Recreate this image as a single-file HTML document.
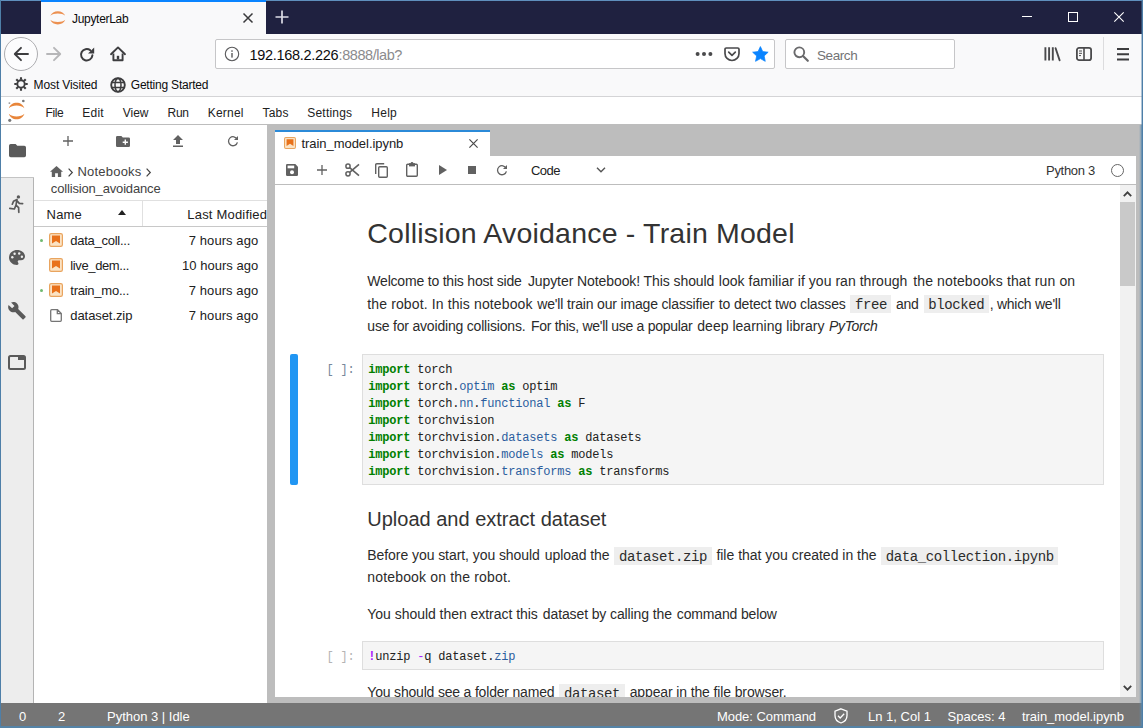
<!DOCTYPE html>
<html>
<head>
<meta charset="utf-8">
<title>JupyterLab</title>
<style>
*{box-sizing:border-box;margin:0;padding:0}
html,body{width:1143px;height:728px;overflow:hidden;background:#fff;font-family:"Liberation Sans",sans-serif;color:#222}
.abs{position:absolute}
#win{position:absolute;left:0;top:0;width:1143px;height:728px;overflow:hidden;background:#f9f9fa}
.t{position:absolute;white-space:nowrap;line-height:1}
.m{font-family:"Liberation Mono",monospace}
svg{position:absolute;overflow:visible}
/* ---------- browser chrome ---------- */
#titlebar{left:0;top:0;width:1143px;height:34px;background:#1f2140}
#tab{left:41px;top:0;width:225px;height:34px;background:#f9f9fa;border-top:2px solid #0a84ff}
#navbar{left:0;top:34px;width:1143px;height:63px;background:#f9f9fa;border-bottom:1px solid #d4d4d6}
#urlbar{left:215px;top:39px;width:560px;height:30px;background:#fff;border:1px solid #c6c6c8;border-radius:2px}
#searchbar{left:785px;top:39px;width:170px;height:30px;background:#fff;border:1px solid #c6c6c8;border-radius:2px}
/* ---------- jupyterlab ---------- */
#menubar{left:0;top:97px;width:1143px;height:28px;background:#fff;border-bottom:1px solid #bdbdbd}
#lab{left:0;top:125px;width:1143px;height:578px;background:#bdbdbd}
#sidebar{left:0;top:125px;width:34px;height:578px;background:#ededed;border-right:1px solid #b4b4b4}
#sidetab{left:0;top:125px;width:35px;height:52px;background:#fff}
#sidetop{left:0;top:177px;width:34px;height:1px;background:#c4c4c4}
#fb{left:34px;top:125px;width:233px;height:578px;background:#fff}
#nbtab{left:275px;top:130px;width:215px;height:26px;background:#fff;border-top:2px solid #2b8ad8}
#nbtool{left:275px;top:156px;width:861px;height:29px;background:#fff;border-bottom:1px solid #bdbdbd}
#nb{left:275px;top:185px;width:861px;height:512px;background:#fff;overflow:hidden}
#nbclip{left:275px;top:185px;width:861px;height:512px;overflow:hidden}
#nbin{left:-275px;top:-185px;width:1143px;height:728px}
#status{left:0;top:703px;width:1143px;height:25px;background:#757575}
#bl{left:0;top:0;width:1px;height:728px;background:#4e7fa8}
#br{left:1142px;top:0;width:1px;height:728px;background:#4e7fa8}
#br3{left:1141px;top:0;width:1px;height:728px;background:rgba(78,127,168,.45)}
#bb{left:0;top:726px;width:1143px;height:2px;background:#5583a6}
#bt{left:0;top:0;width:1143px;height:1px;background:#5f8fbd}
#br2{left:1139px;top:125px;width:3px;height:601px;background:linear-gradient(to right,rgba(91,139,176,0),rgba(91,139,176,.75))}
</style>
</head>
<body>
<div id="win">
<div class="abs" id="titlebar"></div><div class="abs" id="bt"></div>
<div class="abs" id="tab"></div>
<div class="abs" id="navbar"></div>
<div class="abs" id="urlbar"></div>
<div class="abs" id="searchbar"></div>
<div class="abs" id="menubar"></div>
<div class="abs" id="lab"></div>
<div class="abs" id="sidebar"></div>
<div class="abs" id="sidetab"></div><div class="abs" id="sidetop"></div>
<div class="abs" id="fb"></div>
<div class="abs" id="nbtab"></div>
<div class="abs" id="nbtool"></div>
<div class="abs" id="nb"></div>
<div class="abs" id="status"></div>
<svg style="left:49.200px;top:8.600px" width="17.600" height="17.600" viewBox="0 0 16 16"><path d="M1.2 6.2C2.2 3.6 4.9 2 8 2s5.8 1.6 6.8 4.2C13.3 4.9 10.8 4.2 8 4.2S2.700 4.900 1.200 6.200z" fill="#ec9050"/><path d="M1.2 9.800C2.2 12.400 4.900 14 8 14s5.800-1.600 6.800-4.200C13.300 11.100 10.800 11.800 8 11.800S2.700 11.100 1.200 9.800z" fill="#ec9050"/></svg>
<div class="t" style="left:72.0px;top:12.5px;font-size:12px;color:#0c0c0d;letter-spacing:-0.307px;">JupyterLab</div>
<svg style="left:243px;top:13px" width="10" height="10" viewBox="0 0 10 10"><path d="M0.500 0.500L9.500 9.500M9.500 0.500L0.500 9.500" stroke="#3a3a3c" stroke-width="1.500" fill="none"/></svg>
<svg style="left:275px;top:10px" width="14" height="14" viewBox="0 0 14 14"><path d="M7 0.500V13.500M0.500 7H13.500" stroke="#dcdce6" stroke-width="1.700" fill="none"/></svg>
<svg style="left:1022px;top:12px" width="104" height="11" viewBox="0 0 104 11"><path d="M0 4.500H10" stroke="#fff" stroke-width="1"/><rect x="46.500" y="0.500" width="9" height="9" fill="none" stroke="#fff" stroke-width="1"/><path d="M92.300 0.300L101.700 9.700M101.700 0.300L92.300 9.700" stroke="#fff" stroke-width="1.100"/></svg>
<div class="abs" style="left:4px;top:37px;width:34px;height:34px;border-radius:50%;border:1px solid #adadb0;background:#fcfcfd"></div>
<svg style="left:13px;top:46px" width="16" height="16" viewBox="0 0 16 16"><path d="M15 8H2M8 1.800L1.800 8L8 14.200" stroke="#3d3d3f" stroke-width="1.900" fill="none" stroke-linecap="round" stroke-linejoin="round"/></svg>
<svg style="left:46px;top:46px" width="16" height="16" viewBox="0 0 16 16"><path d="M1 8H14M8 1.800L14.200 8L8 14.200" stroke="#b6b6b8" stroke-width="1.900" fill="none" stroke-linecap="round" stroke-linejoin="round"/></svg>
<svg style="left:78.500px;top:46.500px" width="16" height="15" viewBox="0 0 16 15"><path d="M13.400 8.300A5.700 5.700 0 1 1 11.300 3.300" stroke="#3d3d3f" stroke-width="2" fill="none" stroke-linecap="round"/><path d="M15.200 0.400V6.600H9z" fill="#3d3d3f"/></svg>
<svg style="left:110px;top:46px" width="16" height="16" viewBox="0 0 16 16"><path d="M1 8.200L8 1.400L15 8.200" stroke="#3d3d3f" stroke-width="1.900" fill="none" stroke-linecap="round" stroke-linejoin="round"/><path d="M3.400 7.600V14.200H12.600V7.600" stroke="#3d3d3f" stroke-width="1.900" fill="none" stroke-linejoin="round"/><rect x="6.800" y="9.800" width="2.400" height="3.600" fill="#3d3d3f"/></svg>
<svg style="left:224px;top:46px" width="16" height="16" viewBox="0 0 16 16"><circle cx="8" cy="8" r="6.700" fill="none" stroke="#5a5a5c" stroke-width="1.100"/><rect x="7.300" y="7" width="1.400" height="4.600" fill="#5a5a5c"/><rect x="7.300" y="4.300" width="1.400" height="1.500" fill="#5a5a5c"/></svg>
<div class="t" style="left:249.6px;top:47.6px;font-size:14.5px;color:#0c0c0d;letter-spacing:-0.318px;">192.168.2.226</div>
<div class="t" style="left:338.6px;top:47.6px;font-size:14.5px;color:#8b8b8d;letter-spacing:-0.433px;">:8888/lab?</div>
<svg style="left:695px;top:52px" width="18" height="4" viewBox="0 0 18 4"><circle cx="2.600" cy="2" r="2" fill="#4a4a4c"/><circle cx="9" cy="2" r="2" fill="#4a4a4c"/><circle cx="15.400" cy="2" r="2" fill="#4a4a4c"/></svg>
<svg style="left:724px;top:47px" width="16" height="15" viewBox="0 0 16 15"><path d="M2.300 1H13.700Q15 1 15 2.300V6.500A7 7 0 0 1 1 6.500V2.300Q1 1 2.300 1z" stroke="#4a4a4c" stroke-width="1.700" fill="none"/><path d="M4.700 5.200L8 8.400L11.300 5.200" stroke="#4a4a4c" stroke-width="1.700" fill="none" stroke-linecap="round" stroke-linejoin="round"/></svg>
<svg style="left:751.800px;top:46px" width="16.800" height="15.900" viewBox="0 0 18 17"><path d="M9 0.600L11.500 6L17.300 6.600L13 10.600L14.200 16.400L9 13.500L3.800 16.400L5 10.600L0.700 6.600L6.500 6z" fill="#0a84ff" stroke="#0a84ff" stroke-width="0.800" stroke-linejoin="round"/></svg>
<svg style="left:793px;top:46px" width="16" height="16" viewBox="0 0 16 16"><circle cx="6.300" cy="6.300" r="4.900" fill="none" stroke="#6a6a6c" stroke-width="1.900"/><path d="M10 10L14.800 14.800" stroke="#6a6a6c" stroke-width="2.200" stroke-linecap="round"/></svg>
<div class="t" style="left:817.0px;top:48.5px;font-size:13.5px;color:#737375;letter-spacing:-0.414px;">Search</div>
<svg style="left:1044px;top:47px" width="17" height="14" viewBox="0 0 17 14"><path d="M1.400 0.300V13.500M5.100 0.300V13.500M8.800 0.300V13.500" stroke="#4a4a4c" stroke-width="1.900"/><path d="M11.600 1.200L15.600 13.300" stroke="#4a4a4c" stroke-width="1.900" stroke-linecap="round"/></svg>
<svg style="left:1076px;top:47px" width="16" height="14" viewBox="0 0 16 14"><rect x="0.900" y="0.900" width="14.200" height="12.200" rx="2.200" fill="none" stroke="#4a4a4c" stroke-width="1.800"/><path d="M8 1V13" stroke="#4a4a4c" stroke-width="1.600"/><path d="M3 4H6M3 6.300H6M3 8.600H5" stroke="#4a4a4c" stroke-width="1"/></svg>
<div class="abs" style="left:1103px;top:37px;width:1px;height:33px;background:#dcdcde"></div>
<svg style="left:1117px;top:48px" width="12" height="13" viewBox="0 0 12 13"><path d="M0 1H12M0 6.200H12M0 11.400H12" stroke="#3d3d3f" stroke-width="2"/></svg>
<svg style="left:14px;top:77px" width="14" height="14" viewBox="0 0 14 14"><circle cx="7" cy="7" r="3.700" fill="none" stroke="#3d3d3f" stroke-width="1.900"/><path d="M7 0.300V2.800M7 11.200V13.700M0.300 7H2.800M11.200 7H13.700M2.260 2.260L4.030 4.030M9.970 9.970L11.740 11.740M2.260 11.740L4.030 9.970M9.970 4.030L11.740 2.260" stroke="#3d3d3f" stroke-width="2.100"/></svg>
<div class="t" style="left:33.6px;top:78.8px;font-size:12px;color:#0c0c0d;letter-spacing:-0.120px;">Most Visited</div>
<svg style="left:110px;top:77px" width="16" height="16" viewBox="0 0 16 16"><circle cx="8" cy="8" r="6.800" fill="none" stroke="#3d3d3f" stroke-width="1.900"/><ellipse cx="8" cy="8" rx="3" ry="6.800" fill="none" stroke="#3d3d3f" stroke-width="1.500"/><path d="M1.300 5.600H14.700M1.300 10.400H14.700" stroke="#3d3d3f" stroke-width="1.500"/></svg>
<div class="t" style="left:130.8px;top:78.8px;font-size:12px;color:#0c0c0d;letter-spacing:-0.215px;">Getting Started</div>
<svg style="left:7.400px;top:99px" width="19.200" height="24" viewBox="0 0 16 20"><path d="M1.500 7.800C2.400 4.900 5 3.200 8 3.200s5.600 1.700 6.500 4.600C13 6.300 10.700 5.500 8 5.500S3 6.300 1.500 7.800z" fill="#e8853a"/><path d="M1.500 12.200C2.400 15.100 5 16.800 8 16.800s5.600-1.700 6.500-4.600C13 13.700 10.700 14.500 8 14.500S3 13.700 1.500 12.200z" fill="#e8853a"/><circle cx="13.600" cy="1.700" r="1.100" fill="#767677"/><circle cx="2.300" cy="17.800" r="1.300" fill="#767677"/><circle cx="2" cy="3.400" r="0.800" fill="#989798"/></svg>
<div class="t" style="left:45.4px;top:107.1px;font-size:12px;color:#212121;letter-spacing:-0.336px;">File</div>
<div class="t" style="left:82.3px;top:107.1px;font-size:12px;color:#212121;letter-spacing:0.203px;">Edit</div>
<div class="t" style="left:122.7px;top:107.1px;font-size:12px;color:#212121;">View</div>
<div class="t" style="left:167.6px;top:107.1px;font-size:12px;color:#212121;letter-spacing:-0.305px;">Run</div>
<div class="t" style="left:207.7px;top:107.1px;font-size:12px;color:#212121;letter-spacing:0.219px;">Kernel</div>
<div class="t" style="left:262.5px;top:107.1px;font-size:12px;color:#212121;letter-spacing:0.185px;">Tabs</div>
<div class="t" style="left:307.3px;top:107.1px;font-size:12px;color:#212121;letter-spacing:0.193px;">Settings</div>
<div class="t" style="left:371.3px;top:107.1px;font-size:12px;color:#212121;letter-spacing:0.253px;">Help</div>
<svg style="left:8.700px;top:144.300px" width="17" height="13.300" viewBox="0 0 18 14"><path d="M1.800 0H7L8.800 1.800H16.200Q18 1.800 18 3.600V12.200Q18 14 16.200 14H1.800Q0 14 0 12.200V1.800Q0 0 1.800 0z" fill="#5a5a5a"/></svg>
<svg style="left:9px;top:195px" width="15" height="18" viewBox="0 0 15 18"><circle cx="9.400" cy="1.900" r="1.700" fill="#5a5a5a"/><path d="M8 4.500L4.500 6.300L3.300 9.200M8 4.500L7 10.200L9.600 12.600L9.800 17.300M7 10.200L5.400 14L0.800 13.300M8.300 6.200L10.300 8.300L13.600 8.600" stroke="#5a5a5a" stroke-width="1.700" fill="none" stroke-linecap="round" stroke-linejoin="round"/></svg>
<svg style="left:9px;top:250px" width="16" height="15" viewBox="0 0 16 15"><path d="M8 0C3.600 0 0 3.300 0 7.500S3.600 15 8 15c.9 0 1.500-.6 1.500-1.400 0-.4-.2-.7-.4-1-.2-.3-.4-.6-.4-1 0-.8.700-1.400 1.500-1.400H12c2.200 0 4-1.700 4-3.800C16 2.800 12.400 0 8 0z" fill="#5a5a5a"/><circle cx="3.300" cy="7.300" r="1.200" fill="#eee"/><circle cx="5.600" cy="3.700" r="1.200" fill="#eee"/><circle cx="10.200" cy="3.500" r="1.200" fill="#eee"/><circle cx="12.900" cy="6.700" r="1.200" fill="#eee"/></svg>
<svg style="left:8px;top:301px" width="18" height="18" viewBox="0 0 18 18"><path d="M17.500 15.300L10.200 8C10.900 6.100 10.500 4 9 2.500 7.400 .9 5 .6 3.100 1.500L6.500 4.900 4.100 7.300.6 3.900C-.3 5.800.1 8.200 1.700 9.800c1.500 1.500 3.700 1.900 5.500 1.200l7.300 7.300c.3.300.8.300 1.100 0l1.800-1.800c.4-.4.400-.900.100-1.200z" fill="#5a5a5a"/></svg>
<svg style="left:8px;top:355px" width="18" height="15" viewBox="0 0 18 15"><rect x="1" y="1" width="16" height="13" rx="1.500" fill="none" stroke="#5a5a5a" stroke-width="2"/><rect x="10" y="1" width="7" height="4" fill="#5a5a5a"/></svg>
<svg style="left:63px;top:136px" width="10" height="10" viewBox="0 0 10 10"><path d="M5 0V10M0 5H10" stroke="#616161" stroke-width="1.300"/></svg>
<svg style="left:116px;top:136px" width="14" height="11" viewBox="0 0 14 11"><path d="M1.300 0H5.400L6.800 1.400H12.700Q14 1.400 14 2.700V9.700Q14 11 12.700 11H1.300Q0 11 0 9.700V1.300Q0 0 1.300 0z" fill="#616161"/><path d="M9.300 3.600V8.800M6.700 6.200H11.900" stroke="#fff" stroke-width="1.400"/></svg>
<svg style="left:173px;top:135px" width="10" height="12" viewBox="0 0 10 12"><path d="M5 0L10 5H7V9H3V5H0z" fill="#616161"/><rect x="0" y="10.500" width="10" height="1.500" fill="#616161"/></svg>
<svg style="left:227px;top:135px" width="12" height="12" viewBox="0 0 12 12"><path d="M10.100 4.300A4.500 4.500 0 1 0 10.400 7.300" stroke="#616161" stroke-width="1.300" fill="none"/><path d="M11 1V5H7z" fill="#616161"/></svg>
<svg style="left:50px;top:166px" width="13" height="11" viewBox="0 0 13 11"><path d="M6.500 0L13 5.800H11.200V11H7.900V7.200H5.100V11H1.800V5.800H0z" fill="#616161"/></svg>
<svg style="left:68.3px;top:167.5px" width="5" height="9" viewBox="0 0 5 9"><path d="M0.600 0.600L4.300 4.500L0.600 8.400" stroke="#424242" stroke-width="1.200" fill="none"/></svg>
<div class="t" style="left:77.5px;top:165.0px;font-size:13px;color:#424242;letter-spacing:0.205px;">Notebooks</div>
<svg style="left:146px;top:167.5px" width="5" height="9" viewBox="0 0 5 9"><path d="M0.600 0.600L4.300 4.500L0.600 8.400" stroke="#424242" stroke-width="1.200" fill="none"/></svg>
<div class="t" style="left:50.8px;top:181.6px;font-size:13px;color:#424242;letter-spacing:-0.161px;">collision_avoidance</div>
<div class="abs" style="left:34px;top:200px;width:233px;height:27px;border-top:1px solid #e0e0e0;border-bottom:1px solid #c8c8c8"></div>
<div class="abs" style="left:142px;top:201px;width:1px;height:25px;background:#e0e0e0"></div>
<div class="t" style="left:46.6px;top:207.5px;font-size:13px;color:#212121;letter-spacing:0.153px;">Name</div>
<svg style="left:118px;top:210px" width="8" height="5" viewBox="0 0 8 5"><path d="M4 0L8 5H0z" fill="#212121"/></svg>
<div class="t" style="left:187.3px;top:207.5px;font-size:13px;color:#212121;letter-spacing:0.198px;">Last Modified</div>
<div class="abs" style="left:39.500px;top:238.5px;width:3px;height:3px;border-radius:50%;background:#6fba70"></div>
<svg style="left:49px;top:233px" width="14" height="14" viewBox="0 0 14 14"><rect x="0.600" y="0.600" width="12.800" height="12.800" rx="1.600" fill="#fbe3c4" stroke="#e9a45e" stroke-width="1.200"/><path d="M3 2.600H11V10.600L7 8L3 10.600z" fill="#e8711a"/></svg>
<div class="t" style="left:70.3px;top:234.0px;font-size:13px;color:#212121;letter-spacing:-0.265px;">data_coll...</div>
<div class="t" style="left:188.8px;top:234.0px;font-size:13px;color:#212121;letter-spacing:0.075px;">7 hours ago</div>
<svg style="left:49px;top:258px" width="14" height="14" viewBox="0 0 14 14"><rect x="0.600" y="0.600" width="12.800" height="12.800" rx="1.600" fill="#fbe3c4" stroke="#e9a45e" stroke-width="1.200"/><path d="M3 2.600H11V10.600L7 8L3 10.600z" fill="#e8711a"/></svg>
<div class="t" style="left:70.3px;top:259.0px;font-size:13px;color:#212121;letter-spacing:-0.380px;">live_dem...</div>
<div class="t" style="left:182.0px;top:259.0px;font-size:13px;color:#212121;letter-spacing:0.033px;">10 hours ago</div>
<div class="abs" style="left:39.500px;top:288.5px;width:3px;height:3px;border-radius:50%;background:#6fba70"></div>
<svg style="left:49px;top:283px" width="14" height="14" viewBox="0 0 14 14"><rect x="0.600" y="0.600" width="12.800" height="12.800" rx="1.600" fill="#fbe3c4" stroke="#e9a45e" stroke-width="1.200"/><path d="M3 2.600H11V10.600L7 8L3 10.600z" fill="#e8711a"/></svg>
<div class="t" style="left:70.3px;top:284.0px;font-size:13px;color:#212121;letter-spacing:-0.247px;">train_mo...</div>
<div class="t" style="left:188.8px;top:284.0px;font-size:13px;color:#212121;letter-spacing:0.075px;">7 hours ago</div>
<svg style="left:50px;top:309px" width="12" height="13" viewBox="0 0 12 13"><path d="M1.700 0.700H7.500L11.300 4.500V11.300Q11.300 12.300 10.300 12.300H1.700Q0.700 12.300 0.700 11.300V1.700Q0.700 0.700 1.700 0.700zM7.300 0.900V4.700H11.100" fill="none" stroke="#757575" stroke-width="1.300"/></svg>
<div class="t" style="left:70.3px;top:309.0px;font-size:13px;color:#212121;letter-spacing:-0.080px;">dataset.zip</div>
<div class="t" style="left:188.8px;top:309.0px;font-size:13px;color:#212121;letter-spacing:0.075px;">7 hours ago</div>
<svg style="left:284px;top:137px" width="12" height="12" viewBox="0 0 14 14"><rect x="0.600" y="0.600" width="12.800" height="12.800" rx="1.600" fill="#fbe3c4" stroke="#e9a45e" stroke-width="1.200"/><path d="M3 2.600H11V10.600L7 8L3 10.600z" fill="#e8711a"/></svg>
<div class="t" style="left:301.5px;top:136.8px;font-size:13px;color:#212121;letter-spacing:-0.049px;">train_model.ipynb</div>
<svg style="left:469px;top:139px" width="9" height="9" viewBox="0 0 9 9"><path d="M0.400 0.400L8.600 8.600M8.600 0.400L0.400 8.600" stroke="#4a4a4a" stroke-width="1.200"/></svg>
<svg style="left:286px;top:164px" width="12" height="12" viewBox="0 0 12 12"><path d="M1.300 0H9.300L12 2.700V10.700Q12 12 10.700 12H1.300Q0 12 0 10.700V1.300Q0 0 1.300 0z" fill="#616161"/><rect x="1.600" y="1.600" width="6.600" height="2.700" fill="#fff"/><circle cx="6" cy="8.200" r="2" fill="#fff"/></svg>
<svg style="left:317px;top:165px" width="10" height="10" viewBox="0 0 10 10"><path d="M5 0V10M0 5H10" stroke="#616161" stroke-width="1.300"/></svg>
<svg style="left:345px;top:163px" width="15" height="14" viewBox="0 0 15 14"><circle cx="3" cy="3.200" r="2.100" fill="none" stroke="#616161" stroke-width="1.500"/><circle cx="3" cy="10.800" r="2.100" fill="none" stroke="#616161" stroke-width="1.500"/><path d="M4.600 4.600L14 12.700M4.600 9.400L14 1.300" stroke="#616161" stroke-width="1.600"/></svg>
<svg style="left:375px;top:163px" width="13" height="15" viewBox="0 0 13 15"><path d="M0.700 11V1.800Q0.700 0.700 1.800 0.700H9.200" fill="none" stroke="#616161" stroke-width="1.400"/><rect x="3.700" y="3.700" width="8.600" height="10.600" rx="1" fill="none" stroke="#616161" stroke-width="1.400"/></svg>
<svg style="left:406px;top:162px" width="12" height="15" viewBox="0 0 12 15"><rect x="0.700" y="2.200" width="10.600" height="12.100" rx="1" fill="none" stroke="#616161" stroke-width="1.400"/><rect x="3" y="1.200" width="6" height="3.200" fill="#616161"/><circle cx="6" cy="1.400" r="1.400" fill="#616161"/></svg>
<svg style="left:439px;top:165px" width="8" height="10" viewBox="0 0 8 10"><path d="M0 0L8 5L0 10z" fill="#616161"/></svg>
<div class="abs" style="left:468px;top:166px;width:8px;height:8px;background:#616161"></div>
<svg style="left:496px;top:164px" width="12" height="12" viewBox="0 0 12 12"><path d="M10.100 4.300A4.500 4.500 0 1 0 10.400 7.300" stroke="#616161" stroke-width="1.300" fill="none"/><path d="M11 1V5H7z" fill="#616161"/></svg>
<div class="t" style="left:531.0px;top:163.8px;font-size:13px;color:#212121;letter-spacing:-0.520px;">Code</div>
<svg style="left:596px;top:167px" width="10" height="6" viewBox="0 0 10 6"><path d="M1 0.800L5 4.800L9 0.800" stroke="#555" stroke-width="1.400" fill="none"/></svg>
<div class="t" style="left:1046.0px;top:163.8px;font-size:13px;color:#333;letter-spacing:-0.291px;">Python 3</div>
<div class="abs" style="left:1111px;top:164px;width:13px;height:13px;border-radius:50%;border:1.700px solid #666"></div>
<div class="t" style="left:19.0px;top:710.3px;font-size:13px;color:#fff;letter-spacing:-0.634px;">0</div>
<div class="t" style="left:58.0px;top:710.3px;font-size:13px;color:#fff;letter-spacing:-0.634px;">2</div>
<div class="t" style="left:107.0px;top:710.3px;font-size:13px;color:#fff;letter-spacing:-0.012px;">Python 3 | Idle</div>
<div class="t" style="left:717.0px;top:710.3px;font-size:13px;color:#fff;letter-spacing:-0.055px;">Mode: Command</div>
<div class="t" style="left:868.0px;top:710.3px;font-size:13px;color:#fff;letter-spacing:0.011px;">Ln 1, Col 1</div>
<div class="t" style="left:947.5px;top:710.3px;font-size:13px;color:#fff;letter-spacing:0.019px;">Spaces: 4</div>
<div class="t" style="left:1022.0px;top:710.3px;font-size:13px;color:#fff;letter-spacing:-0.037px;">train_model.ipynb</div>
<svg style="left:834px;top:708px" width="14" height="16" viewBox="0 0 14 16"><path d="M7 0.800L13 3.200V7.500C13 11 10.500 13.900 7 15C3.500 13.900 1 11 1 7.500V3.200z" fill="none" stroke="#fff" stroke-width="1.300"/><path d="M4 7.800L6.200 10L10.200 5.800" fill="none" stroke="#fff" stroke-width="1.300"/></svg>
<div class="abs" id="nbclip"><div class="abs" id="nbin">
<div class="t" style="left:367.3px;top:219.4px;font-size:28.5px;color:#333;letter-spacing:0.198px;">Collision Avoidance - Train Model</div>
<div class="t" style="left:367.3px;top:273.9px;font-size:14px;color:#2b2b2b;letter-spacing:-0.199px;">Welcome to this host side</div>
<div class="t" style="left:527.9px;top:273.9px;font-size:14px;color:#2b2b2b;letter-spacing:-0.085px;">Jupyter Notebook! This should</div>
<div class="t" style="left:718.8px;top:273.9px;font-size:14px;color:#2b2b2b;letter-spacing:0.033px;">look familiar if you ran through</div>
<div class="t" style="left:913.2px;top:273.9px;font-size:14px;color:#2b2b2b;letter-spacing:0.132px;">the notebooks that run on</div>
<div class="t" style="left:367.3px;top:296.9px;font-size:14px;color:#2b2b2b;letter-spacing:0.126px;">the robot. In this notebook</div>
<div class="t" style="left:537.3px;top:296.9px;font-size:14px;color:#2b2b2b;letter-spacing:-0.169px;">we&#x27;ll train our image classifier</div>
<div class="t" style="left:718.8px;top:296.9px;font-size:14px;color:#2b2b2b;letter-spacing:-0.145px;">to detect two classes</div>
<div class="abs" style="left:850.4px;top:295.3px;width:41.1px;height:18px;background:#eeeeee"></div><div class="t m" style="left:855.0px;top:298.1px;font-size:14px;color:#2b2b2b;letter-spacing:-0.40px;white-space:pre;">free</div>
<div class="t" style="left:896.0px;top:296.9px;font-size:14px;color:#2b2b2b;letter-spacing:-0.286px;">and</div>
<div class="abs" style="left:923.6px;top:295.3px;width:65.4px;height:18px;background:#eeeeee"></div><div class="t m" style="left:928.3px;top:298.1px;font-size:14px;color:#2b2b2b;letter-spacing:-0.40px;white-space:pre;">blocked</div>
<div class="t" style="left:989.7px;top:296.9px;font-size:14px;color:#2b2b2b;letter-spacing:-0.267px;">, which we&#x27;ll</div>
<div class="t" style="left:367.3px;top:318.9px;font-size:14px;color:#2b2b2b;letter-spacing:-0.190px;">use for avoiding collisions.</div>
<div class="t" style="left:531.0px;top:318.9px;font-size:14px;color:#2b2b2b;letter-spacing:-0.299px;">For this, we&#x27;ll use a popular</div>
<div class="t" style="left:697.3px;top:318.9px;font-size:14px;color:#2b2b2b;letter-spacing:0.016px;">deep learning library</div>
<div class="t" style="left:829.0px;top:318.9px;font-size:14px;color:#2b2b2b;font-style:italic;letter-spacing:-0.349px;">PyTorch</div>
<div class="abs" style="left:290px;top:354px;width:8px;height:131px;background:#2196f3;border-radius:2px"></div>
<div class="abs" style="left:362px;top:354px;width:742px;height:131px;background:#f5f5f5;border:1px solid #dedede"></div>
<div class="t m" style="left:326.5px;top:363.8px;font-size:12px;color:#76889b;letter-spacing:-0.20px;white-space:pre;">[ ]:</div>
<div class="t m" style="left:368.2px;top:363.8px;font-size:12px;color:#008000;letter-spacing:-0.20px;white-space:pre;font-weight:700;">import</div>
<div class="t m" style="left:417.2px;top:363.8px;font-size:12px;color:#212121;letter-spacing:-0.20px;white-space:pre;">torch</div>
<div class="t m" style="left:368.2px;top:380.8px;font-size:12px;color:#008000;letter-spacing:-0.20px;white-space:pre;font-weight:700;">import</div>
<div class="t m" style="left:417.2px;top:380.8px;font-size:12px;color:#212121;letter-spacing:-0.20px;white-space:pre;">torch.</div>
<div class="t m" style="left:459.2px;top:380.8px;font-size:12px;color:#2b5d9e;letter-spacing:-0.20px;white-space:pre;">optim</div>
<div class="t m" style="left:501.2px;top:380.8px;font-size:12px;color:#008000;letter-spacing:-0.20px;white-space:pre;font-weight:700;">as</div>
<div class="t m" style="left:522.2px;top:380.8px;font-size:12px;color:#212121;letter-spacing:-0.20px;white-space:pre;">optim</div>
<div class="t m" style="left:368.2px;top:397.8px;font-size:12px;color:#008000;letter-spacing:-0.20px;white-space:pre;font-weight:700;">import</div>
<div class="t m" style="left:417.2px;top:397.8px;font-size:12px;color:#212121;letter-spacing:-0.20px;white-space:pre;">torch.</div>
<div class="t m" style="left:459.2px;top:397.8px;font-size:12px;color:#2b5d9e;letter-spacing:-0.20px;white-space:pre;">nn</div>
<div class="t m" style="left:473.2px;top:397.8px;font-size:12px;color:#212121;letter-spacing:-0.20px;white-space:pre;">.</div>
<div class="t m" style="left:480.2px;top:397.8px;font-size:12px;color:#2b5d9e;letter-spacing:-0.20px;white-space:pre;">functional</div>
<div class="t m" style="left:557.2px;top:397.8px;font-size:12px;color:#008000;letter-spacing:-0.20px;white-space:pre;font-weight:700;">as</div>
<div class="t m" style="left:578.2px;top:397.8px;font-size:12px;color:#212121;letter-spacing:-0.20px;white-space:pre;">F</div>
<div class="t m" style="left:368.2px;top:414.8px;font-size:12px;color:#008000;letter-spacing:-0.20px;white-space:pre;font-weight:700;">import</div>
<div class="t m" style="left:417.2px;top:414.8px;font-size:12px;color:#212121;letter-spacing:-0.20px;white-space:pre;">torchvision</div>
<div class="t m" style="left:368.2px;top:431.8px;font-size:12px;color:#008000;letter-spacing:-0.20px;white-space:pre;font-weight:700;">import</div>
<div class="t m" style="left:417.2px;top:431.8px;font-size:12px;color:#212121;letter-spacing:-0.20px;white-space:pre;">torchvision.</div>
<div class="t m" style="left:501.2px;top:431.8px;font-size:12px;color:#2b5d9e;letter-spacing:-0.20px;white-space:pre;">datasets</div>
<div class="t m" style="left:564.2px;top:431.8px;font-size:12px;color:#008000;letter-spacing:-0.20px;white-space:pre;font-weight:700;">as</div>
<div class="t m" style="left:585.2px;top:431.8px;font-size:12px;color:#212121;letter-spacing:-0.20px;white-space:pre;">datasets</div>
<div class="t m" style="left:368.2px;top:448.8px;font-size:12px;color:#008000;letter-spacing:-0.20px;white-space:pre;font-weight:700;">import</div>
<div class="t m" style="left:417.2px;top:448.8px;font-size:12px;color:#212121;letter-spacing:-0.20px;white-space:pre;">torchvision.</div>
<div class="t m" style="left:501.2px;top:448.8px;font-size:12px;color:#2b5d9e;letter-spacing:-0.20px;white-space:pre;">models</div>
<div class="t m" style="left:550.2px;top:448.8px;font-size:12px;color:#008000;letter-spacing:-0.20px;white-space:pre;font-weight:700;">as</div>
<div class="t m" style="left:571.2px;top:448.8px;font-size:12px;color:#212121;letter-spacing:-0.20px;white-space:pre;">models</div>
<div class="t m" style="left:368.2px;top:465.8px;font-size:12px;color:#008000;letter-spacing:-0.20px;white-space:pre;font-weight:700;">import</div>
<div class="t m" style="left:417.2px;top:465.8px;font-size:12px;color:#212121;letter-spacing:-0.20px;white-space:pre;">torchvision.</div>
<div class="t m" style="left:501.2px;top:465.8px;font-size:12px;color:#2b5d9e;letter-spacing:-0.20px;white-space:pre;">transforms</div>
<div class="t m" style="left:578.2px;top:465.8px;font-size:12px;color:#008000;letter-spacing:-0.20px;white-space:pre;font-weight:700;">as</div>
<div class="t m" style="left:599.2px;top:465.8px;font-size:12px;color:#212121;letter-spacing:-0.20px;white-space:pre;">transforms</div>
<div class="t" style="left:367.3px;top:509.1px;font-size:20px;color:#333;">Upload and extract dataset</div>
<div class="t" style="left:367.3px;top:548.3px;font-size:14px;color:#2b2b2b;letter-spacing:-0.065px;">Before you start, you should</div>
<div class="t" style="left:544.8px;top:548.3px;font-size:14px;color:#2b2b2b;letter-spacing:-0.071px;">upload the</div>
<div class="abs" style="left:614.3px;top:546.7px;width:97.3px;height:18px;background:#eeeeee"></div><div class="t m" style="left:619.0px;top:549.5px;font-size:14px;color:#2b2b2b;letter-spacing:-0.40px;white-space:pre;">dataset.zip</div>
<div class="t" style="left:716.4px;top:548.3px;font-size:14px;color:#2b2b2b;letter-spacing:-0.008px;">file that you created in the</div>
<div class="abs" style="left:881.2px;top:546.7px;width:177.2px;height:18px;background:#eeeeee"></div><div class="t m" style="left:885.8px;top:549.5px;font-size:14px;color:#2b2b2b;letter-spacing:-0.40px;white-space:pre;">data_collection.ipynb</div>
<div class="t" style="left:367.3px;top:570.1px;font-size:14px;color:#2b2b2b;letter-spacing:0.163px;">notebook on the robot.</div>
<div class="t" style="left:367.3px;top:606.6px;font-size:14px;color:#2b2b2b;letter-spacing:-0.036px;">You should then extract this</div>
<div class="t" style="left:542.8px;top:606.6px;font-size:14px;color:#2b2b2b;letter-spacing:-0.115px;">dataset by calling the</div>
<div class="t" style="left:676.8px;top:606.6px;font-size:14px;color:#2b2b2b;letter-spacing:-0.149px;">command below</div>
<div class="abs" style="left:362px;top:641px;width:742px;height:29px;background:#f5f5f5;border:1px solid #dedede"></div>
<div class="t m" style="left:326.5px;top:650.8px;font-size:12px;color:#b4b4b4;letter-spacing:-0.20px;white-space:pre;">[ ]:</div>
<div class="t m" style="left:368.2px;top:650.8px;font-size:12px;color:#aa22ff;letter-spacing:-0.20px;white-space:pre;font-weight:700;">!</div>
<div class="t m" style="left:375.2px;top:650.8px;font-size:12px;color:#212121;letter-spacing:-0.20px;white-space:pre;">unzip </div>
<div class="t m" style="left:417.2px;top:650.8px;font-size:12px;color:#aa22ff;letter-spacing:-0.20px;white-space:pre;">-</div>
<div class="t m" style="left:424.2px;top:650.8px;font-size:12px;color:#212121;letter-spacing:-0.20px;white-space:pre;">q dataset.</div>
<div class="t m" style="left:494.2px;top:650.8px;font-size:12px;color:#2b5d9e;letter-spacing:-0.20px;white-space:pre;">zip</div>
<div class="t" style="left:367.3px;top:685.3px;font-size:14px;color:#2b2b2b;letter-spacing:-0.187px;">You should see a folder named</div>
<div class="abs" style="left:559.3px;top:683.7px;width:65.6px;height:18px;background:#eeeeee"></div><div class="t m" style="left:564.1px;top:686.5px;font-size:14px;color:#2b2b2b;letter-spacing:-0.40px;white-space:pre;">dataset</div>
<div class="t" style="left:629.7px;top:685.3px;font-size:14px;color:#2b2b2b;letter-spacing:-0.127px;">appear in the file browser.</div>
<div class="abs" style="left:1120px;top:185px;width:16px;height:512px;background:#f1f1f1"></div>
<div class="abs" style="left:1120px;top:202px;width:15px;height:84px;background:#c9c9c9"></div>
<svg style="left:1123px;top:191px" width="9" height="6" viewBox="0 0 9 6"><path d="M0.800 5.200L4.500 1.400L8.200 5.200" stroke="#404040" stroke-width="1.800" fill="none"/></svg>
<svg style="left:1123px;top:685px" width="9" height="6" viewBox="0 0 9 6"><path d="M0.800 0.800L4.500 4.600L8.200 0.800" stroke="#404040" stroke-width="1.800" fill="none"/></svg>
</div></div>

<div class="abs" id="bl"></div><div class="abs" id="br"></div><div class="abs" id="bb"></div><div class="abs" id="br3"></div><div class="abs" id="br2"></div>
</div>
</body>
</html>
